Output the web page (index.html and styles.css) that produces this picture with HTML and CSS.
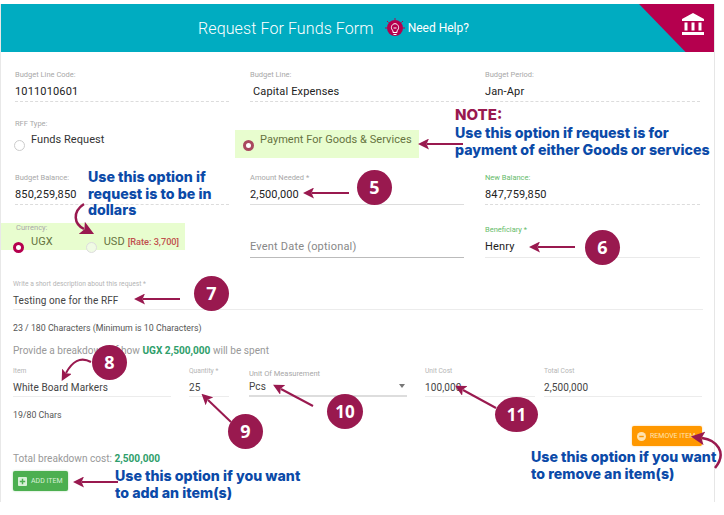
FILE: index.html
```html
<!DOCTYPE html>
<html lang="en">
<head>
<meta charset="utf-8">
<title>Request For Funds Form</title>
<link rel="stylesheet" href="styles.css">
</head>
<body>
<div class="shot">
  <div class="card">
    <header class="head">
      <h1 class="title">Request For Funds Form</h1>
      <svg class="bulb" viewBox="0 0 20 20" width="20" height="20">
        <circle cx="10" cy="10" r="8" fill="#b5004e"/>
        <g fill="none" stroke="#fff" stroke-width="1">
          <path d="M8 14.500v-1.800c-3-2-1.500-7 2-7s5 5 2 7v1.800z"/>
          <path d="M8.500 16.500h3M8.500 10h3"/>
        </g>
        <g stroke="#b5004e" stroke-width="1"><path d="M10 0v2M2 3l1.500 1.500M18 3l-1.500 1.500M0 10h2M18 10h2"/></g>
      </svg>
      <span class="help">Need Help?</span>
      <div class="corner">
        <svg class="bank" viewBox="0 0 22 22" width="22" height="22">
          <path fill="#fff" d="M11 0 L22 6 V8 H0 V6 Z M2.500 9.500h3v8h-3z M9.500 9.500h3v8h-3z M16.500 9.500h3v8h-3z M0 19h22v3H0z"/>
        </svg>
      </div>
    </header>

    <section class="grid first">
      <div class="field dashed"><label class="lab">Budget Line Code:</label><div class="val">1011010601</div></div>
      <div class="field dashed"><label class="lab">Budget Line:</label><div class="val indent">Capital Expenses</div></div>
      <div class="field dashed"><label class="lab">Budget Period:</label><div class="val">Jan-Apr</div></div>
    </section>

    <section class="grid type">
      <div class="typecol">
        <label class="lab">RFF Type:</label>
        <div class="opt"><span class="radio"></span><span class="opttext">Funds Request</span></div>
      </div>
      <div class="hl payment"><span class="radio on soft"></span><span class="opttext olive">Payment For Goods &amp; Services</span></div>
    </section>

    <section class="grid balances">
      <div class="field dashed"><label class="lab">Budget Balance:</label><div class="val">850,259,850</div></div>
      <div class="field solid"><label class="lab">Amount Needed *</label><div class="val">2,500,000</div></div>
      <div class="field dashed"><label class="lab green">New Balance:</label><div class="val">847,759,850</div></div>
    </section>

    <section class="grid currency">
      <div class="hl money">
        <label class="lab">Currency:</label>
        <div class="moneyrow">
          <span class="radio on"></span><span class="opttext olive">UGX</span>
          <span class="radio faint"></span><span class="opttext olive">USD</span><b class="rate">[Rate: 3,700]</b>
        </div>
      </div>
      <div class="field event"><div class="ph">Event Date (optional)</div></div>
      <div class="field solid thin"><label class="lab green">Beneficiary *</label><div class="val">Henry</div></div>
    </section>

    <section class="desc">
      <label class="lab tiny">Write a short description about this request *</label>
      <div class="val small">Testing one for the RFF</div>
    </section>
    <p class="count">23 / 180 Characters (Minimum is 10 Characters)</p>
    <p class="provide">Provide a breakdown of how <b class="sum">UGX 2,500,000</b> will be spent</p>

    <section class="items">
      <div class="cell"><label class="lab tiny">Item</label><div class="val small">White Board Markers</div></div>
      <div class="cell"><label class="lab tiny">Quantity *</label><div class="val small">25</div></div>
      <div class="cell unit"><label class="lab">Unit Of Measurement</label><div class="val small">Pcs</div><span class="caret"></span></div>
      <div class="cell wide"><label class="lab tiny">Unit Cost</label><div class="val small">100,000</div></div>
      <div class="cell"><label class="lab tiny">Total Cost</label><div class="val small">2,500,000</div></div>
    </section>
    <p class="chars">19/80 Chars</p>
    <div class="removerow">
      <button class="btn remove"><svg viewBox="0 0 10 10" width="9" height="9"><circle cx="5" cy="5" r="5" fill="#ffe3b0"/><rect x="2.500" y="4.200" width="5" height="1.600" fill="#ff9800"/></svg>REMOVE ITEM</button>
    </div>
    <p class="total">Total breakdown cost: <b class="sum">2,500,000</b></p>
    <button class="btn add"><svg viewBox="0 0 10 10" width="9" height="9"><rect width="10" height="10" rx="1" fill="#d8f0d8"/><path d="M5 2v6M2 5h6" stroke="#4caf50" stroke-width="1.600"/></svg>ADD ITEM</button>
  </div>

  <svg class="arrows" viewBox="0 0 724 515" width="724" height="515">
    <defs>
      <marker id="tip" markerWidth="5.500" markerHeight="5.500" refX="1" refY="2.750" orient="auto" markerUnits="strokeWidth"><path d="M5.500 2.750 L0 0 L1.200 2.750 L0 5.500 Z" fill="#99194f"/></marker>
    </defs>
    <g fill="none" stroke="#99194f" stroke-width="2" marker-end="url(#tip)">
      <path d="M463 144H427"/>
      <path d="M349 193H312"/>
      <path d="M575 247H538"/>
      <path d="M180 299H143"/>
      <path d="M118 482H82"/>
      <path d="M231 422L208 400"/>
      <path d="M313 406L281 389"/>
      <path d="M496 408L463 390"/>
      <path d="M91 362C80 356 72 362 66 373"/>
      <path stroke-width="2.500" d="M84 204C72 212 74 224 84 229"/>
      <path stroke-width="2.500" d="M715 468C728 452 716 440 702 438"/>
    </g>
  </svg>

  <div class="badge b5">5</div>
  <div class="badge b6">6</div>
  <div class="badge b7">7</div>
  <div class="badge b8">8</div>
  <div class="badge b9">9</div>
  <div class="badge b10">10</div>
  <div class="badge b11">11</div>

  <div class="note n-note"><span class="maroon">NOTE:</span><br>Use this option if request is for<br>payment of either Goods or services</div>
  <div class="note n-dollars">Use this option if<br>request is to be in<br>dollars</div>
  <div class="note n-add">Use this option if you want<br>to add an item(s)</div>
  <div class="note n-remove">Use this option if you want<br>to remove an item(s)</div>
</div>
</body>
</html>
```

FILE: styles.css
```css
* { box-sizing: border-box; }
html, body { margin: 0; padding: 0; background: #fff; }
body { font-family: Roboto, "Liberation Sans", sans-serif; color: #222; overflow: hidden; }
.shot { position: relative; width: 724px; height: 515px; overflow: hidden; padding: 4px 0 0 1px; }
.card { position: relative; width: 714px; height: 498px; border-right: 1px solid #e6e6e6; box-shadow: -1px 0 0 #e8e8e8; }

.head { position: relative; height: 48px; background: #00acc1; display: flex; align-items: center; justify-content: center; color: #fff; padding-right: 48px; width: 713px; }
.title { font-size: 16px; font-weight: 300; margin: 0 11px 0 0; letter-spacing: .1px; }
.bulb { margin-right: 3px; }
.help { font-size: 12px; font-weight: 400; }
.corner { position: absolute; right: 0; top: 0; width: 75px; height: 48px; background: #b5004e; clip-path: polygon(0 0, 100% 0, 100% 100%, 62% 100%); }
.bank { position: absolute; right: 10px; top: 9px; }

.grid { display: grid; grid-template-columns: 214px 214px 215px; column-gap: 21px; padding-left: 14px; }
.first { padding-top: 18px; }
.field { height: 32px; }
.lab { display: block; font-size: 7.500px; line-height: 9px; color: #a8a8a8; white-space: nowrap; }
.tiny { font-size: 6.700px; color: #b5b5b5; }
.green { color: #66bb6a; }
.val { font-size: 11px; line-height: 14px; margin-top: 6px; color: #222; letter-spacing: .15px; }
.indent { padding-left: 3px; }
.small { font-size: 10px; color: #444; letter-spacing: .1px; }
.dashed { border-bottom: 1px dashed #dcdcdc; }
.solid { border-bottom: 1px solid #ddd; }
.thin { border-bottom-color: #eaeaea; }

.type { height: 71px; padding-top: 17px; }
.opt { display: flex; align-items: flex-start; margin-top: 5px; }
.opttext { font-size: 11px; line-height: 14px; color: #333; letter-spacing: .05px; white-space: nowrap; }
.olive { color: #66733f; }
.radio { display: block; flex: none; width: 11px; height: 11px; border-radius: 50%; border: 1px solid #ccc; background: #fff; margin: 7px 6px 0 -1px; }
.radio.on { border: 3px solid #b5004e; }
.radio.soft { border-color: #a9495f; }
.radio.faint { border-color: #ddd; background: #f0fbe4; }

.hl { background: #e8fdcf; }
.payment { display: flex; align-items: flex-start; width: 184px; height: 28px; margin: 11px 0 0 -15px; padding: 3px 0 0 8px; }
.payment .radio { margin: 7px 6px 0 0; }

.currency { padding-top: 20px; height: 73px; }
.money { width: 184px; height: 27px; margin: -2px 0 0 -14px; padding: 0 0 0 15px; }
.moneyrow { display: flex; align-items: flex-start; margin-top: 3px; position: relative; left: -3px; }
.moneyrow .radio { margin: 7px 7px 0 0; }
.moneyrow .radio.faint { margin: 7px 7px 0 33px; }
.rate { font-size: 9.200px; line-height: 14px; margin-left: 3px; color: #c0504d; font-weight: 500; white-space: nowrap; }
.event { height: 33px; padding-top: 15px; border-bottom: 1px solid #bbb; }
.currency .thin { height: 33px; }
.ph { font-size: 11px; line-height: 14px; color: #888; letter-spacing: .2px; }

.desc { margin: 0 0 0 12px; width: 690px; height: 32px; padding-top: 2px; border-bottom: 1px solid #ececec; }
.desc .val { margin-top: 5px; }
.count { margin: 12px 0 0 12px; font-size: 8.800px; line-height: 12px; color: #555; }
.provide { margin: 10px 0 0 12px; font-size: 10.100px; line-height: 14px; color: #999; }
.sum { color: #2e9e6b; font-weight: 700; }

.items { display: grid; grid-template-columns: 158px 40px 160px 101px 158px; column-gap: 18px; margin: 9px 0 0 12px; width: 691px; height: 30px; }
.cell { position: relative; border-bottom: 1px solid #ececec; height: 30px; }
.cell .val { margin-top: 5px; }
.unit { border-bottom: 2px solid #ddd; margin-left: 2px; }
.unit .lab { margin-top: 2px; }
.cell.unit .val { margin-top: 2px; }
.wide { margin-right: -9px; }
.caret { position: absolute; right: 2px; top: 17px; width: 0; height: 0; border: 3px solid transparent; border-top: 4px solid #777; }

.chars { margin: 12px 0 0 12px; font-size: 8.800px; line-height: 12px; color: #555; }
.removerow { display: flex; justify-content: flex-end; padding-right: 12px; margin-top: 5px; }
.btn { display: flex; align-items: center; border: 0; border-radius: 2px; color: #fff; font-family: inherit; font-size: 7px; height: 20px; gap: 4px; padding: 0 0 0 5px; white-space: nowrap; }
.remove { background: #ff9800; width: 70px; color: #ffe3b0; box-shadow: 0 0 2px rgba(255,152,0,.5); }
.total { margin: 6px 0 0 12px; font-size: 10.100px; line-height: 13px; color: #999; }
.add { background: #4caf50; width: 55px; margin: 6px 0 0 12px; color: #d8f0d8; box-shadow: 0 0 2px rgba(76,175,80,.5); }

.arrows { position: absolute; left: 0; top: 0; pointer-events: none; }

.badge { position: absolute; width: 35px; height: 35px; border-radius: 50%; background: #99194f; color: #fff; font-family: "Open Sans", sans-serif; font-weight: 700; font-size: 18px; line-height: 35px; text-align: center; }
.b5 { left: 357px; top: 170px; }
.b6 { left: 585px; top: 230px; }
.b7 { left: 194px; top: 276px; }
.b8 { left: 92px; top: 345px; }
.b9 { left: 228px; top: 414px; }
.b10 { left: 327px; top: 394px; width: 36px; font-size: 17px; }
.b11 { left: 495px; top: 397px; width: 43px; font-size: 17px; }

.note { position: absolute; font-family: Inter, "Open Sans", sans-serif; font-weight: 800; font-size: 14.200px; line-height: 16.500px; color: #0b4aa8; white-space: nowrap; }
.maroon { color: #99194f; font-size: 15px; line-height: 20px; }
.n-note { left: 455px; top: 105px; }
.n-dollars { left: 88px; top: 169px; }
.n-add { left: 115px; top: 468px; }
.n-remove { left: 531px; top: 449px; }
```
